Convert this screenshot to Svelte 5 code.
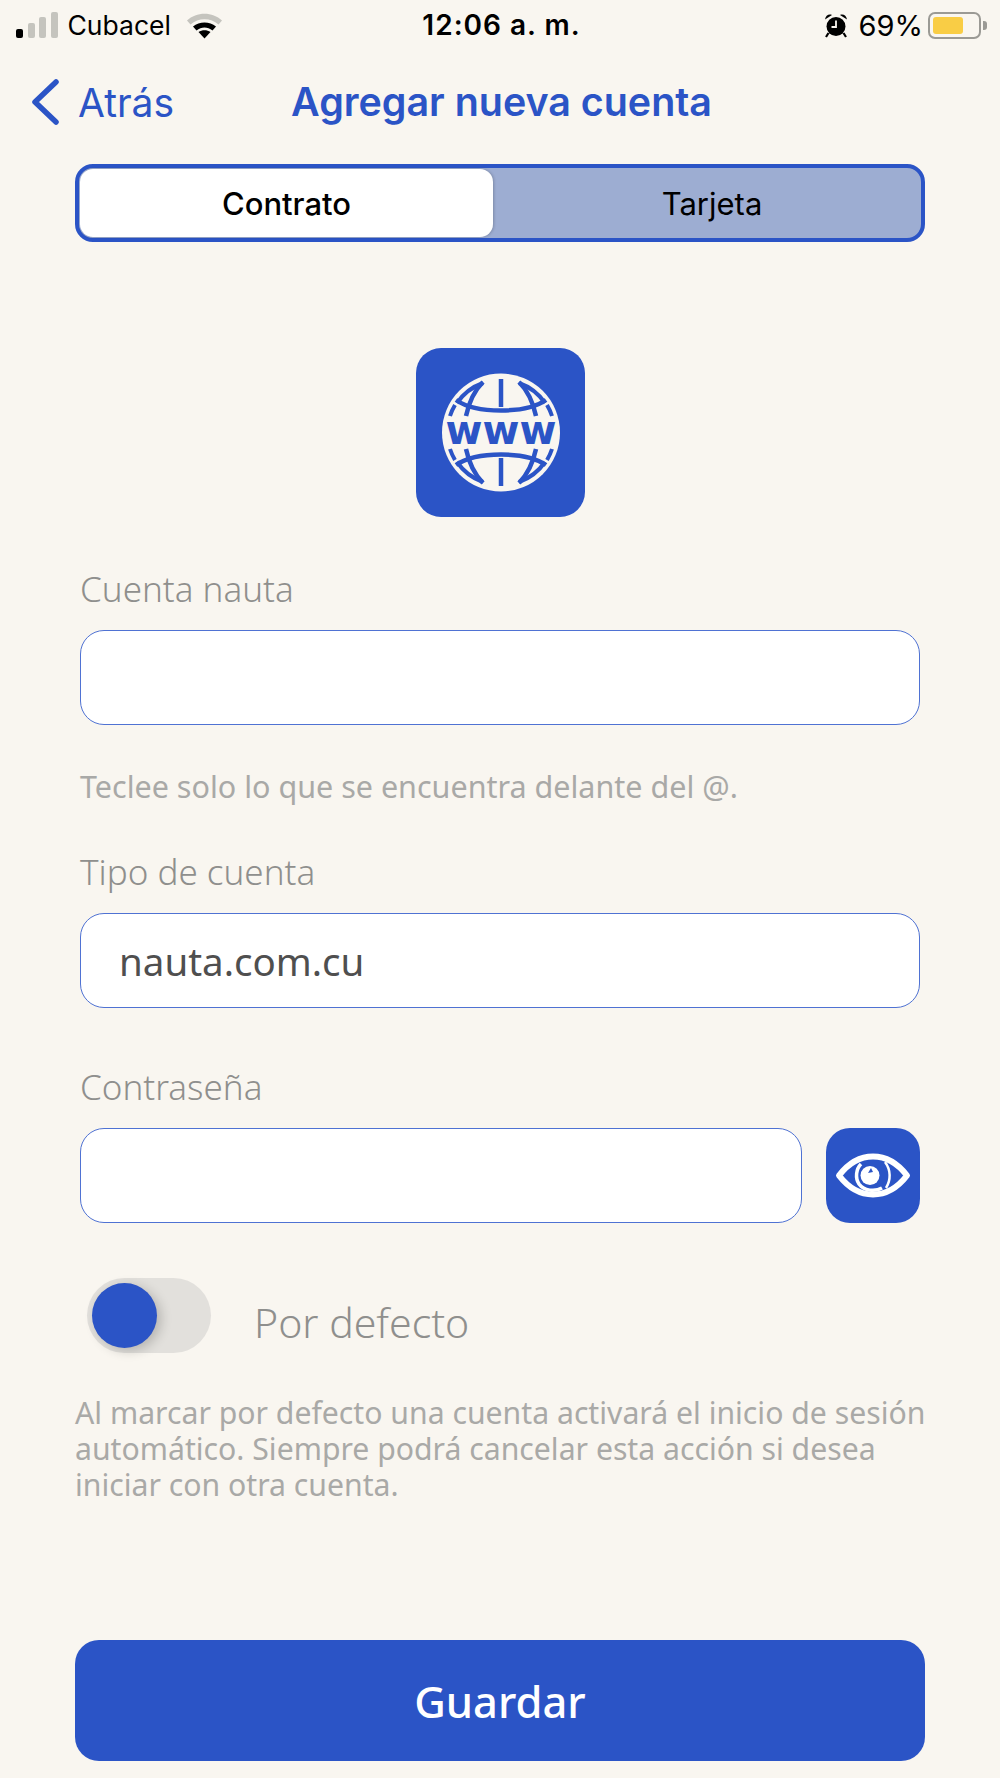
<script>
  const blue = '#2b54c6';
</script>

<div class="page">
  <header class="status">
    <div class="status-left">
      <div class="signal"><i class="on b1"></i><i class="b2"></i><i class="b3"></i><i class="b4"></i></div>
      <span class="carrier">Cubacel</span>
      <svg class="wifi" width="37" height="27" viewBox="0 0 37 27">
        <path d="M1 8.500C10.500 -0.500 26.500 -0.500 36 8.500L32.500 12.500C24.500 5.500 12.500 5.500 4.500 12.500Z" fill="#c5c4be"/>
        <path d="M7 14.500C13.500 9 23.500 9 30 14.500L26.500 18.500C21.500 14.500 15.500 14.500 10.500 18.500Z" fill="#000"/>
        <path d="M12.500 20C16 17.500 21 17.500 24.500 20L18.500 26.500Z" fill="#000"/>
      </svg>
    </div>
    <span class="time">12:06 a. m.</span>
    <div class="status-right">
      <svg class="alarm" width="24" height="25" viewBox="0 0 24 25">
        <circle cx="12" cy="13.500" r="9.500" fill="#000"/>
        <path d="M1 6.500C1.500 2.500 5 0.500 8 2Z M23 6.500C22.500 2.500 19 0.500 16 2Z" fill="#000"/>
        <path d="M4.500 20L2 24M19.500 20L22 24" stroke="#000" stroke-width="2.200"/>
        <path d="M12 7.500V14H7.500" fill="none" stroke="#faf7f1" stroke-width="1.800"/>
      </svg>
      <span class="pct">69%</span>
      <div class="battery"><div class="battery-body"><div class="battery-fill"></div></div><div class="battery-nub"></div></div>
    </div>
  </header>

  <nav class="nav">
    <svg class="chevron" width="28" height="46" viewBox="0 0 28 46">
      <path d="M25 3L4 23L25 43" fill="none" stroke={blue} stroke-width="5.500" stroke-linecap="round" stroke-linejoin="round"/>
    </svg>
    <span class="back">Atrás</span>
    <span class="title">Agregar nueva cuenta</span>
  </nav>

  <div class="segment">
    <div class="seg active">Contrato</div>
    <div class="seg right">Tarjeta</div>
  </div>

  <div class="tile">
    <svg width="169" height="169" viewBox="0 0 169 169">
      <circle cx="85" cy="84.500" r="59" fill="#f9f6f0"/>
      <g fill="none" stroke={blue}>
        <path d="M85 31V59M85 110V138" stroke-width="4.500"/>
        <path d="M40 52C60 66 110 66 130 52M40 117C60 103 110 103 130 117" stroke-width="4.500"/>
        <path d="M67 34C58 43 53 54 50 68M103 34C112 43 117 54 120 68M67 135C58 126 53 115 50 101M103 135C112 126 117 115 120 101" stroke-width="4.500"/>
        <path d="M41 55A53 53 0 0 1 67 35M129 55A53 53 0 0 0 103 35M41 114A53 53 0 0 0 67 134M129 114A53 53 0 0 1 103 134" stroke-width="4"/>
        <path d="M34 68A53 53 0 0 1 39 57M136 68A53 53 0 0 0 131 57M34 101A53 53 0 0 0 39 112M136 101A53 53 0 0 1 131 112" stroke-width="4"/>
      </g>
      <text x="85" y="96" text-anchor="middle" class="www">www</text>
    </svg>
  </div>

  <form class="form">
    <div class="label">Cuenta nauta</div>
    <div class="input"></div>
    <p class="hint">Teclee solo lo que se encuentra delante del @.</p>

    <div class="label tipo">Tipo de cuenta</div>
    <div class="input"><span class="value">nauta.com.cu</span></div>

    <div class="label pass">Contraseña</div>
    <div class="pass-row">
      <div class="input grow"></div>
      <div class="eye">
        <svg width="94" height="95" viewBox="0 0 94 95">
          <path d="M13 47.500C23 34.500 35 28.500 47 28.500C59 28.500 71 34.500 81 47.500C71 60.500 59 66.500 47 66.500C35 66.500 23 60.500 13 47.500Z" fill="none" stroke="#fff" stroke-width="6" stroke-linejoin="round"/>
          <circle cx="44" cy="47.500" r="9.500" fill="#fff"/>
          <path d="M35 36C30 41 29 50 33 56C38 63 49 64 56 60" fill="none" stroke="#fff" stroke-width="3.500"/>
          <path d="M59 34C65 42 65 52 60 60" fill="none" stroke="#fff" stroke-width="2.500"/>
          <path d="M45 40L47 44L42 45Z" fill={blue}/>
        </svg>
      </div>
    </div>
  </form>

  <div class="toggle-row">
    <div class="toggle"><div class="knob"></div></div>
    <span class="toggle-label">Por defecto</span>
  </div>

  <p class="note">Al marcar por defecto una cuenta activará el inicio de sesión automático. Siempre podrá cancelar esta acción si desea iniciar con otra cuenta.</p>

  <button class="save" type="button">Guardar</button>
</div>

<style>
  :global(body) { margin: 0; background: #f9f6f0; }
  .page {
    width: 1000px; height: 1778px; box-sizing: border-box; overflow: hidden;
    background: #f9f6f0; font-family: "Noto Sans", "Open Sans", sans-serif;
    display: flex; flex-direction: column;
  }
  .status {
    height: 50px; padding: 0 13px 0 16px; display: grid; grid-template-columns: 1fr auto 1fr;
    align-items: center; font-family: Inter, sans-serif; color: #000; font-size: 26.500px;
  }
  .status-left { display: flex; align-items: center; }
  .signal { display: flex; align-items: flex-end; gap: 4.500px; height: 26px; }
  .signal i { width: 7px; background: #c5c4be; border-radius: 2px; display: block; }
  .signal .on { background: #000; }
  .b1 { height: 9px; } .b2 { height: 15px; } .b3 { height: 21px; } .b4 { height: 26px; }
  .carrier { margin-left: 10px; }
  .wifi { margin-left: 15px; }
  .time { font-size: 28px; font-weight: 600; letter-spacing: 1px; }
  .status-right { display: flex; align-items: center; justify-content: flex-end; }
  .pct { margin-left: 11px; font-size: 29px; }
  .battery { display: flex; align-items: center; margin-left: 5px; }
  .battery-body { width: 53px; height: 27px; box-sizing: border-box; border: 2px solid #9b9a95; border-radius: 7px; padding: 3px; }
  .battery-fill { width: 30px; height: 100%; background: #f9cd45; border-radius: 3px; }
  .battery-nub { width: 4px; height: 9px; background: #9b9a95; border-radius: 0 3px 3px 0; margin-left: 2px; }

  .nav { height: 114px; display: flex; align-items: center; padding: 0 0 10px 31px; box-sizing: border-box; font-family: Inter, sans-serif; color: #2b54c6; }
  .back { font-size: 39px; margin-left: 19px; }
  .title { font-size: 39.400px; font-weight: 600; margin-left: 117px; }

  .segment {
    margin: 0 75px; height: 78px; box-sizing: border-box; border: 4px solid #2b54c6; border-radius: 18px;
    background: #9dadd2; display: grid; grid-template-columns: 414px 1fr; font-family: Inter, sans-serif; font-size: 31px; color: #000;
  }
  .seg { display: flex; align-items: center; justify-content: center; }
  .seg.right { padding-left: 10px; }
  .seg.active { background: #fff; border-radius: 13px; font-weight: 500; margin: 1px 0 1px 1px; box-shadow: 1px 0 3px rgba(0,0,0,.2); }

  .tile { align-self: center; width: 169px; height: 169px; margin-top: 106px; background: #2b54c6; border-radius: 25px; }
  .tile svg { display: block; }
  .www { font-family: "DejaVu Sans", sans-serif; font-weight: 700; font-size: 40px; fill: #2b54c6; letter-spacing: 0; }

  .form { margin: 51px 80px 0; display: flex; flex-direction: column; }
  .label { font-size: 35px; font-weight: 300; color: #8f8f8d; line-height: 42px; }
  .input { height: 95px; margin-top: 20px; box-sizing: border-box; background: #fff; border: 1.500px solid #4f72d3; border-radius: 24px; display: flex; align-items: center; padding-left: 38px; }
  .hint { margin: 44px 0 0; font-size: 30.500px; color: #a9a9a7; line-height: 34px; }
  .tipo { margin-top: 48px; }
  .value { font-size: 38.500px; color: #4f4f4f; }
  .pass { margin-top: 58px; }
  .pass-row { display: flex; align-items: flex-end; gap: 24px; }
  .grow { flex: 1; }
  .eye { width: 94px; height: 95px; background: #2b54c6; border-radius: 24px; flex: none; }
  .eye svg { display: block; }

  .toggle-row { margin: 55px 0 0 87px; display: flex; align-items: center; }
  .toggle { width: 124px; height: 75px; border-radius: 38px; background: #e2e0dc; position: relative; }
  .knob { position: absolute; left: 5px; top: 5px; width: 65px; height: 65px; border-radius: 50%; background: #2b54c6; box-shadow: 4px 3px 12px rgba(0,0,0,.2); }
  .toggle-label { margin-left: 43px; padding-top: 12px; font-size: 41px; font-weight: 300; color: #8f8f8d; }

  .note { margin: 42px 60px 0 75px; font-size: 30.200px; color: #a9a9a7; line-height: 36px; }

  .save {
    margin: auto 75px 17px; height: 121px; border: 0; border-radius: 24px; background: #2b54c6; color: #fff;
    font-family: "Noto Sans", sans-serif; font-size: 43.500px; font-weight: 500; padding: 0;
  }
</style>
